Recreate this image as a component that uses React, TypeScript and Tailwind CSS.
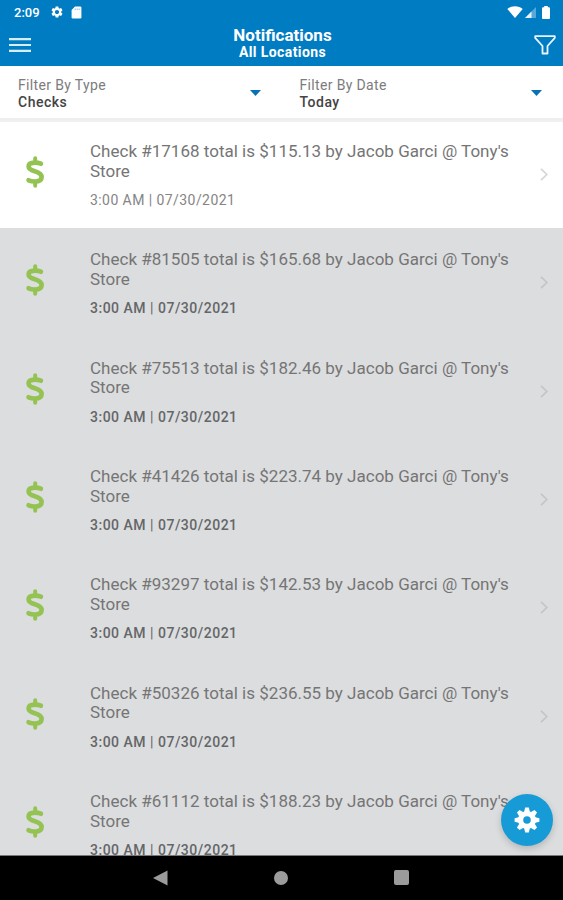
import React from "react";
import { MdSettings } from "react-icons/md";

const checks = [
  { id: "17168", total: "115.13", read: true },
  { id: "81505", total: "165.68", read: false },
  { id: "75513", total: "182.46", read: false },
  { id: "41426", total: "223.74", read: false },
  { id: "93297", total: "142.53", read: false },
  { id: "50326", total: "236.55", read: false },
  { id: "61112", total: "188.23", read: false },
];

function StatusBar() {
  return (
    <div className="flex h-6 items-center pl-[14px] pr-[13px] text-white">
      <span className="w-[36px] pt-px text-[13px] font-medium leading-6">2:09</span>
      <MdSettings className="size-[14px]" />
      <svg className="ml-[7px] h-[13px] w-[11px]" viewBox="0 0 11 13" fill="currentColor">
        <path d="M4 .5h5.2a1.2 1.2 0 0 1 1.2 1.2v9.6a1.2 1.2 0 0 1-1.2 1.2H1.8a1.2 1.2 0 0 1-1.2-1.2V4z" />
        <path d="M4.2 2.5v1.6M6.2 2.5v1.6M8.2 2.5v1.6" stroke="#007cc3" strokeWidth=".5" />
      </svg>
      <svg className="ml-auto h-[12px] w-[16px]" viewBox="0 0 16 12" fill="currentColor">
        <path d="M.3 2.9C4.5-.5 11.500-.5 15.700 2.900L8 12z" />
      </svg>
      <svg className="ml-[2px] h-[12px] w-[11px]" viewBox="0 0 11 12" fill="currentColor">
        <path d="M0 12L11 1v11z" opacity=".35" />
        <path d="M0 12L6.500 5.500V12z" opacity=".85" />
      </svg>
      <svg className="ml-[6px] h-[13px] w-[8px]" viewBox="0 0 8 13" fill="currentColor">
        <path d="M2.200 0h3.600v1.200H7a1 1 0 0 1 1 1V12a1 1 0 0 1-1 1H1a1 1 0 0 1-1-1V2.200a1 1 0 0 1 1-1h1.200z" />
      </svg>
    </div>
  );
}

function TitleBar() {
  return (
    <div className="flex h-[42px] items-start justify-between pl-[9px] pr-[7px] text-white">
      <svg className="mt-[14px] h-[15px] w-[22px]" viewBox="0 0 22 15" fill="#d8edfa">
        <path d="M0 0h22v2.200H0zM0 5.900h22v2.200H0zM0 11.800h22V14H0z" />
      </svg>
      <div className="mt-[2px] text-center">
        <h1 className="text-[17px] font-bold leading-[18px]">Notifications</h1>
        <h2 className="text-[14px] font-bold leading-[16px] tracking-[0.400px]">All Locations</h2>
      </div>
      <svg className="mt-[11px] h-[20px] w-[22px]" viewBox="0 0 22 20" fill="none" stroke="#eaf5fc" strokeWidth="1.800" strokeLinejoin="round">
        <path d="M1.200 1.200h19.600v1.600L13.500 11v7.500h-5V11L1.200 2.800z" />
      </svg>
    </div>
  );
}

function Filter({ label, value }: { label: string; value: string }) {
  return (
    <div className="flex flex-1 items-start justify-between pl-[18px] pr-[21px]">
      <div className="pt-[11px] text-[14px] leading-[17px]">
        <div className="tracking-[0.35px] text-[#7c7c7c]">{label}</div>
        <div className="font-medium tracking-[0.500px] text-[#444]">{value}</div>
      </div>
      <svg className="mt-[24px] h-[6px] w-[11px]" viewBox="0 0 11 6" fill="#0872b9">
        <path d="M0 0h11L5.500 6z" />
      </svg>
    </div>
  );
}

function CheckRow({ id, total, read }: { id: string; total: string; read: boolean }) {
  return (
    <div className={`flex h-[108.340px] shrink-0 ${read ? "bg-white" : "bg-[#dcdddf]"}`}>
      <svg className="ml-[26px] mt-[36px] h-[32px] w-[18px] shrink-0 overflow-visible" viewBox="0 0 18 32" fill="none" stroke="#95c353" strokeWidth="4.700" strokeLinecap="round">
        <path d="M9.200 2.200V6M9.200 26v3.800" strokeWidth="4" />
        <path d="M14.900 7.700C13 6.900 11 6.600 8.800 6.600 5 6.600 2.600 8 2.600 10.500c0 2.500 2.200 3.500 6.200 4.700 4.500 1.400 6.800 2.900 6.800 5.800 0 2.900-2.500 4.500-6.600 4.500-2.500 0-4.600-.4-6.400-1.200" />
      </svg>
      <div className="ml-[46px] w-[430px] pt-[22px]">
        <p className="whitespace-nowrap text-[17px] leading-[19.700px] tracking-[0.01px] text-[#757575]">
          Check #{id} total is ${total} by Jacob Garci @ Tony's
          <br />
          Store
        </p>
        <p className={`mt-[9.500px] text-[14px] leading-[18px] ${read ? "tracking-[0.430px] text-[#858585]" : "font-medium tracking-[0.500px] text-[#646668]"}`}>
          3:00 AM <span className="font-normal">|</span> 07/30/2021
        </p>
      </div>
      <svg className={`ml-auto mr-[15px] mt-[48px] h-[13px] w-[8px] shrink-0 ${read ? "text-[#d6d6d6]" : "text-[#c3c5c7]"}`} viewBox="0 0 8 13" fill="none" stroke="currentColor" strokeWidth="1.700">
        <path d="M1 .8l5.800 5.700L1 12.200" />
      </svg>
    </div>
  );
}

function SettingsButton() {
  return (
    <button className="absolute bottom-[9px] right-[10px] flex size-[52px] items-center justify-center rounded-full bg-[#179bd7] shadow-[0_3px_7px_rgba(0,0,0,0.18)]">
      <svg className="size-[26px]" viewBox="-13 -13 26 26" fill="white">
        {[0, 45, 90, 135].map((angle) => (
          <path key={angle} d="M-1.800-12.400h3.600l1 4v16.800l-1 4h-3.600l-1-4V-8.400z" transform={`rotate(${angle})`} />
        ))}
        <circle r="9" />
        <circle r="3.800" fill="#179bd7" />
      </svg>
    </button>
  );
}

export default function App() {
  return (
    <div className="flex h-[900px] w-[563px] flex-col overflow-hidden bg-[#dcdddf] font-[Roboto,sans-serif]">
      <header className="h-[66px] shrink-0 bg-[#007cc3]">
        <StatusBar />
        <TitleBar />
      </header>
      <div className="flex h-[54px] shrink-0 border-b-2 border-[#eeeeee] bg-white">
        <Filter label="Filter By Type" value="Checks" />
        <Filter label="Filter By Date" value="Today" />
      </div>
      <main className="relative min-h-0 flex-1">
        <div className="flex h-full flex-col overflow-hidden border-t-2 border-[#f0f0f0]">
          <div className="-mt-[2px] flex flex-col">
            {checks.map((check) => (
              <CheckRow key={check.id} {...check} />
            ))}
          </div>
        </div>
        <SettingsButton />
      </main>
      <nav className="flex h-[45px] shrink-0 items-center justify-between border-t border-[#777] bg-black pb-px pl-[153px] pr-[154px]">
        <svg className="h-4 w-[15px]" viewBox="0 0 15 16" fill="#9b9b9b">
          <path d="M14.500.5v15L0 8z" />
        </svg>
        <span className="size-[14px] rounded-full bg-[#9b9b9b]" />
        <span className="size-[15px] rounded-[2px] bg-[#9b9b9b]" />
      </nav>
    </div>
  );
}
